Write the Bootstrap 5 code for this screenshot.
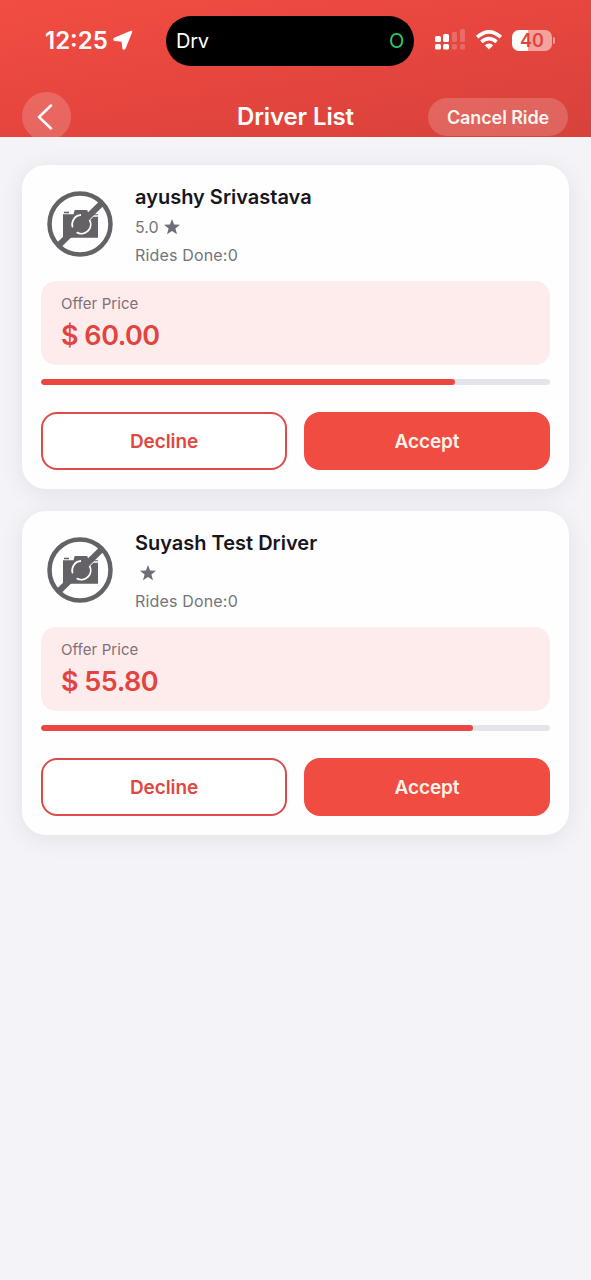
<!DOCTYPE html>
<html lang="en">
<head>
<meta charset="utf-8">
<meta name="viewport" content="width=device-width, initial-scale=1">
<title>Driver List</title>
<link href="https://cdn.jsdelivr.net/npm/bootstrap@5.3.0/dist/css/bootstrap.min.css" rel="stylesheet">
<style>
body{font-family:Inter,"Liberation Sans",sans-serif;background:#f4f3f8;color:#17161d;min-height:1280px}
.app-header{height:137px;background:linear-gradient(170deg,#f24d43 0%,#e6463e 48%,#d6423b 100%)}
.status-row{height:50px;margin-top:16px;padding-left:45px;padding-right:36px}
.clock{font-size:24px;font-weight:600;line-height:50px;width:63px}
.island{width:248px;height:50px;background:#000;border-radius:25px;padding:0 10px;font-size:20px;letter-spacing:-.3px;margin-left:33px}
.island .live{color:#35c565}
.battery{width:40px;height:21px;border-radius:7px;background:linear-gradient(90deg,#fff 40%,#f3a29e 40%);color:#df453e;font-size:18px;font-weight:600;line-height:21px;margin-top:-2px}
.nub{width:2px;height:7px;border-radius:0 2px 2px 0;background:#f3a29e;margin-left:1px;margin-top:-2px}
.nav-row{margin-top:26px;padding:0 23px 0 22px}
.back{width:49px;height:49px;background:rgba(255,255,255,.18)}
.heading{font-size:24px;font-weight:600;line-height:50px;margin-left:166px;letter-spacing:-.12px}
.cancel{height:38px;width:140px;border-radius:19px;background:rgba(255,255,255,.18);font-size:18px;font-weight:600;letter-spacing:-.1px;color:#fff6ee;border:0;padding:0;margin-left:auto;margin-top:6px}
.list{padding:28px 22px;gap:22px}
.ride{height:324px;border:0;border-radius:24px;background:#fefefe;padding:0 19px;box-shadow:0 4px 24px rgba(40,30,40,.08)}
.info{height:116px}
.avatar{margin:26px 0 0 6px}
.who{padding-top:17px;margin-left:22px;color:#75747a;font-size:16px;line-height:28px}
.who h2{font-size:20px;font-weight:600;line-height:31px;margin:0;color:#17161d}
.rides{letter-spacing:.17px}
.offer{height:84px;border-radius:15px;background:#feebec;padding:12px 20px;color:#817078}
.offer small{font-size:15px;line-height:22px;letter-spacing:.08px}
.price{font-size:27px;font-weight:600;line-height:41px;letter-spacing:-.5px;color:#e2443f}
.timer{height:6px;border-radius:3px;background:#e5e4eb;margin-top:14px}
.timer .progress-bar{background:#e94740;border-radius:3px}
.actions{gap:17px;margin-top:27px}
.actions .btn{height:58px;border-radius:16px;font-size:19px;font-weight:600;flex:1 1 0;padding:2px 0 0;letter-spacing:-.1px}
.actions .decline{border:2px solid #e04a48;color:#df4841;background:#fff}
.actions .accept{border:2px solid #f04c42;background:#f04c42;color:#fff3ea}
</style>
</head>
<body>
<svg width="0" height="0" class="position-absolute" aria-hidden="true">
<symbol id="nophoto" viewBox="0 0 66 66">
<path fill="#646266" d="M17 22.300h5v-1.500h-5zM16 23.300h10.500l1-3.700q.2-.7 1-.7h11q.8 0 1 .7l1 3.700H51v23.500H16z"/>
<path d="M43 28.200 46.200 25H52" fill="none" stroke="#fefefe" stroke-width="1.300"/>
<path d="M42.300 28.500A9.300 9.300 0 0 1 29.500 41.300M26 37A9.300 9.300 0 0 1 34 24" fill="none" stroke="#fefefe" stroke-width="1.800"/>
<path d="M11 55 56 11" stroke="#646266" stroke-width="6"/>
<circle cx="35" cy="33.500" r="6.800" fill="#646266"/>
<circle cx="33" cy="33" r="30.500" fill="none" stroke="#646266" stroke-width="4.500"/>
</symbol>
<symbol id="star" viewBox="0 0 16 16"><path fill="#6f6e76" d="m8 0 2.100 5.400 5.900.3-4.600 3.700L13 15.200l-5-3.300-5 3.300 1.600-5.800L0 5.700l5.900-.3z"/></symbol>
</svg>
<header class="app-header text-white overflow-hidden d-flex flex-column">
<div class="status-row d-flex align-items-center flex-shrink-0">
<span class="clock text-nowrap">12:25</span>
<svg width="20" height="20" viewBox="0 0 20 20" style="margin:-2px 0 0 5px"><path fill="#fff" stroke="#fff" stroke-width="2" stroke-linejoin="round" d="M18.300 1.700 1.500 8.700q-.6 1 .3 1.300l7.700.8.800 7.400q.5 1 1.300.2z"/></svg>
<div class="island d-flex align-items-center justify-content-between"><span>Drv</span><span class="live">O</span></div>
<svg width="31" height="22" viewBox="0 0 31 22" style="margin:-2px 0 0 21px"><g fill="#fff"><rect y="7" width="6" height="6" rx="1.500"/><rect y="15" width="6" height="5.500" rx="1.500"/><rect x="8" y="5" width="6" height="8" rx="1.500"/><rect x="8" y="15" width="6" height="5.500" rx="1.500"/></g><g fill="#fff" opacity=".2"><rect x="17" y="3" width="5" height="10" rx="1.500"/><rect x="17" y="15" width="5" height="5.500" rx="1.500"/><rect x="25" y="0" width="5" height="13" rx="1.500"/><rect x="25" y="15" width="5" height="5.500" rx="1.500"/></g></svg>
<svg width="26" height="20" viewBox="0 0 26 20" style="margin:-3px 0 0 10px"><g fill="none" stroke="#fff" stroke-width="3.600"><path d="M1.200 7.200Q13-3.400 24.800 7.200"/><path d="M5.400 11.900q7.600-6.500 15.200 0"/></g><path fill="#fff" d="M8.800 15.300q4.200-3.400 8.400 0L13 19.600z"/></svg>
<span class="battery text-center" style="margin-left:10px">40</span><span class="nub"></span>
</div>
<div class="nav-row d-flex flex-shrink-0">
<span class="back rounded-circle d-flex align-items-center justify-content-center"><svg width="16" height="26" viewBox="0 0 16 26" style="margin-right:4px"><path d="M14 1.500 2 13l12 11.500" fill="none" stroke="#fff" stroke-width="2.500" stroke-linecap="round" stroke-linejoin="round"/></svg></span>
<h1 class="heading mb-0 text-nowrap">Driver List</h1>
<button class="cancel text-nowrap">Cancel Ride</button>
</div>
</header>
<main class="list d-flex flex-column">
<article class="card ride">
<div class="info d-flex"><svg class="avatar" width="66" height="66"><use href="#nophoto"/></svg>
<div class="who"><h2>ayushy Srivastava</h2><div class="d-flex align-items-center"><span>5.0</span><svg width="16" height="16" style="margin-left:5px"><use href="#star"/></svg></div><div class="rides">Rides Done:0</div></div></div>
<div class="offer d-flex flex-column"><small>Offer Price</small><span class="price">$ 60.00</span></div>
<div class="progress timer"><div class="progress-bar" style="width:81.300%"></div></div>
<div class="actions d-flex"><button class="btn decline">Decline</button><button class="btn accept">Accept</button></div>
</article>
<article class="card ride">
<div class="info d-flex"><svg class="avatar" width="66" height="66"><use href="#nophoto"/></svg>
<div class="who"><h2>Suyash Test Driver</h2><div class="d-flex align-items-center" style="height:28px"><svg width="16" height="16" style="margin-left:5px"><use href="#star"/></svg></div><div class="rides">Rides Done:0</div></div></div>
<div class="offer d-flex flex-column"><small>Offer Price</small><span class="price">$ 55.80</span></div>
<div class="progress timer"><div class="progress-bar" style="width:84.900%"></div></div>
<div class="actions d-flex"><button class="btn decline">Decline</button><button class="btn accept">Accept</button></div>
</article>
</main>
<script src="https://cdn.jsdelivr.net/npm/bootstrap@5.3.0/dist/js/bootstrap.bundle.min.js"></script>
</body>
</html>
